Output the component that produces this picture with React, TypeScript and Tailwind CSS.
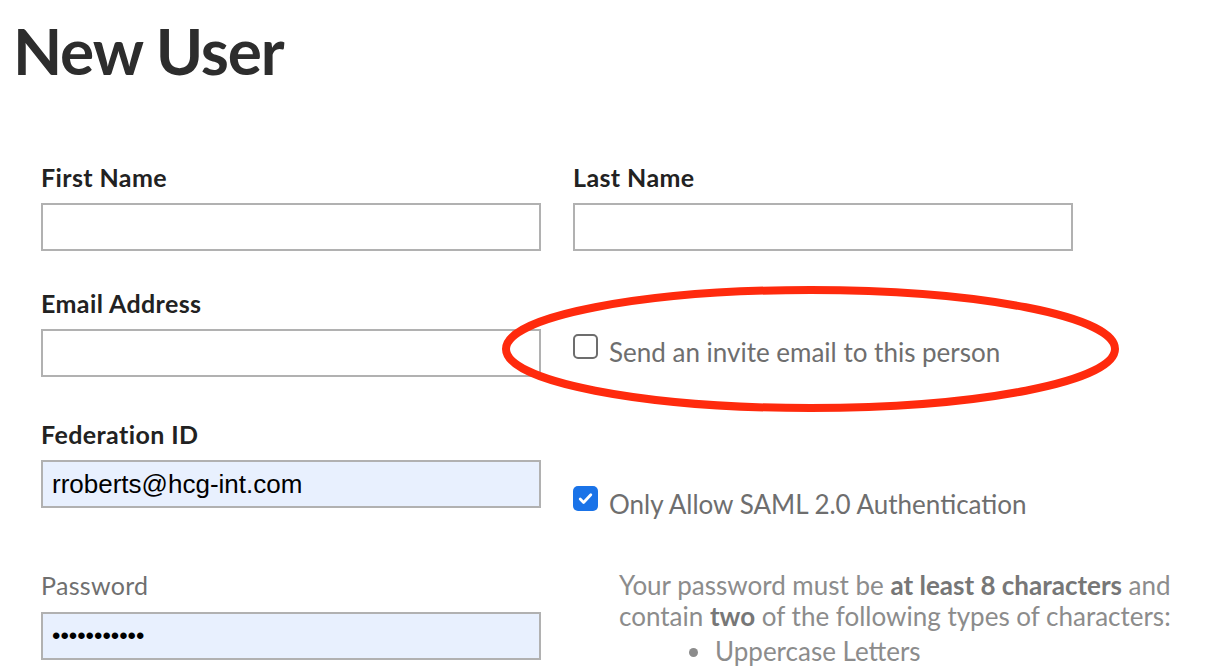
import React from 'react'

const inputBase =
  'block w-[500px] h-[48px] border-2 border-[#b1b1b1] px-[9px] text-[26px] text-black outline-none'

const arial = { fontFamily: '"Liberation Sans", Arial, sans-serif' }

function Label({ children }: { children: React.ReactNode }) {
  return <div className="text-[25px] leading-[30px] mb-[11px] font-bold tracking-[0.4px] text-[#222]">{children}</div>
}

function Checkbox({ checked, text }: { checked?: boolean; text: string }) {
  return (
    <label className="flex items-start gap-[11px]">
      {checked ? (
        <span className="w-[25px] h-[25px] rounded-[5px] bg-[#1a73e8] flex items-center justify-center shrink-0">
          <svg viewBox="0 0 16 16" className="w-[17px] h-[17px]" fill="none" stroke="white" strokeWidth="2.6" strokeLinecap="round" strokeLinejoin="round">
            <path d="M3 8.5l3.2 3.2L13 4.5" />
          </svg>
        </span>
      ) : (
        <span className="w-[25px] h-[25px] rounded-[5px] border-2 border-[#6d6d6d] bg-white shrink-0" />
      )}
      <span className="mt-[3px] text-[26px] leading-[30px] text-[#6e6e6e] whitespace-nowrap">{text}</span>
    </label>
  )
}

export default function App() {
  return (
    <div className="relative h-[670px] bg-white overflow-hidden" style={{ fontFamily: 'Lato, "Open Sans", sans-serif' }}>
      <h1 className="pl-[13px] pt-[19px] text-[64px] leading-[64px] font-bold tracking-[-1.2px] text-[#2d2d2d]">New User</h1>

      <div className="pl-[41px] pt-[79px]">
        <div className="grid grid-cols-[500px_1fr] gap-x-[32px]">
          <div>
            <Label>First Name</Label>
            <input className={inputBase} style={arial} />
          </div>
          <div>
            <Label>Last Name</Label>
            <input className={inputBase} style={arial} />
          </div>
        </div>

        <div className="grid grid-cols-[500px_1fr] gap-x-[32px] mt-[37px] h-[89px]">
          <div>
            <Label>Email Address</Label>
            <input className={inputBase} style={arial} />
          </div>
          <div className="pt-[46px]">
            <Checkbox text="Send an invite email to this person" />
          </div>
        </div>

        <div className="grid grid-cols-[500px_1fr] gap-x-[32px] mt-[42px] h-[89px]">
          <div>
            <Label>Federation ID</Label>
            <input readOnly value="rroberts@hcg-int.com" className={`${inputBase} bg-[#e8f0fe]`} style={arial} />
          </div>
          <div className="pt-[67px]">
            <Checkbox checked text="Only Allow SAML 2.0 Authentication" />
          </div>
        </div>

        <div className="grid grid-cols-[500px_1fr] gap-x-[32px] mt-[62px]">
          <div>
            <div className="text-[25px] leading-[30px] mb-[12px] tracking-[0.3px] text-[#6f6f6f]">Password</div>
            <input
              readOnly
              type="password"
              value="passwordabc"
              className={`${inputBase} bg-[#e8f0fe] !text-[24px]`}
              style={arial}
            />
          </div>
          <div className="pl-[46px] text-[26px] leading-[31px] text-[#8c8c8c] whitespace-nowrap">
            <p>
              Your password must be <b className="text-[#777]">at least 8 characters</b> and
              <br />
              contain <b className="text-[#777]">two</b> of the following types of characters:
            </p>
            <ul className="list-disc pl-[94px] mt-[4px]">
              <li className="pl-[2px]">Uppercase Letters</li>
            </ul>
          </div>
        </div>
      </div>

      <svg className="absolute left-[498px] top-[282px] w-[626px] h-[134px] pointer-events-none" viewBox="0 0 626 134">
        <ellipse cx="312.5" cy="67" rx="304.5" ry="59" fill="none" stroke="#ff2a0d" strokeWidth="8" />
      </svg>
    </div>
  )
}
